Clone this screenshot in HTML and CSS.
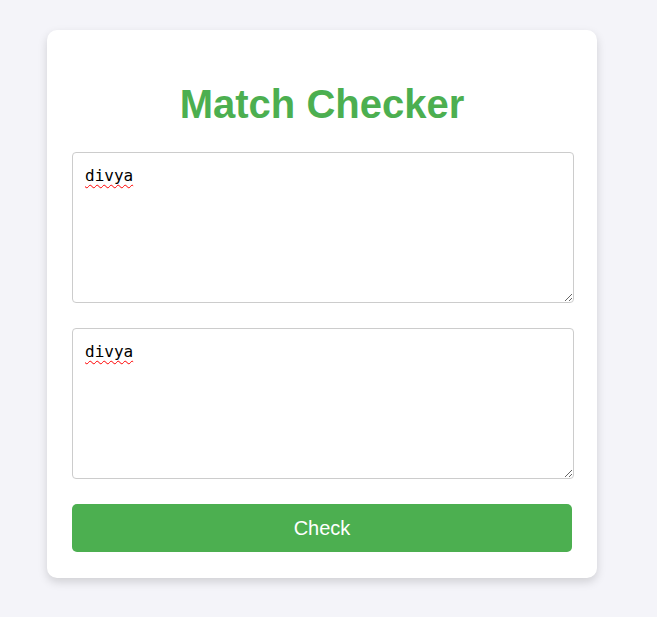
FILE: index.html
```html
<!DOCTYPE html>
<html lang="en">
<head>
<meta charset="utf-8">
<title>Match Checker</title>
<link rel="stylesheet" href="styles.css">
</head>
<body>
  <main class="card">
    <h1 class="title">Match Checker</h1>
    <div class="fields">
      <textarea class="field" spellcheck="false">divya</textarea>
      <textarea class="field" spellcheck="false">divya</textarea>
      <button class="check-btn" type="button">Check</button>
    </div>
  </main>
</body>
</html>
```

FILE: styles.css
```css
html, body {
  margin: 0;
  padding: 0;
}

body {
  background: #f4f4f9;
  font-family: "Liberation Sans", Arial, sans-serif;
  padding: 30px 0 0 47px;
  min-height: 617px;
  box-sizing: border-box;
}

.card {
  width: 550px;
  box-sizing: border-box;
  background: #ffffff;
  border-radius: 10px;
  padding: 25px 25px 26px;
  box-shadow: 0 4px 10px rgba(0, 0, 0, 0.15);
}

.title {
  margin: 26px 0 25px;
  font-size: 40px;
  line-height: 46px;
  font-weight: bold;
  text-align: center;
  color: #4caf50;
}

.fields {
  display: flex;
  flex-direction: column;
  gap: 25px;
}

.field {
  display: block;
  width: 502px;
  height: 151px;
  box-sizing: border-box;
  margin: 0;
  padding: 13px 12px;
  border: 1px solid #cccccc;
  border-radius: 4px;
  font-family: "DejaVu Sans Mono", "Liberation Mono", monospace;
  font-size: 16px;
  line-height: 19px;
  color: #000;
  background: #fff;
  resize: vertical;
  text-decoration: underline wavy #ff0000;
  text-decoration-thickness: 1px;
  text-underline-offset: 3px;
}

.check-btn {
  display: block;
  width: 500px;
  height: 48px;
  margin: 0;
  border: none;
  border-radius: 5px;
  background: #4caf50;
  color: #ffffff;
  font-family: "Liberation Sans", Arial, sans-serif;
  font-size: 20px;
  cursor: pointer;
}
```
